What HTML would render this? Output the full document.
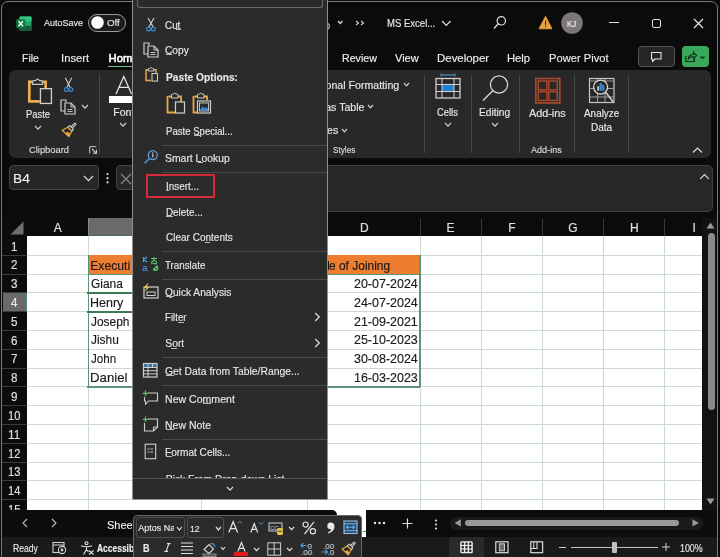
<!DOCTYPE html>
<html><head><meta charset="utf-8"><style>
html,body{margin:0;padding:0;width:720px;height:557px;overflow:hidden;background:#0b0b0b;}
body{position:relative;font-family:"Liberation Sans", sans-serif;}
.t{position:absolute;white-space:nowrap;line-height:1;-webkit-text-stroke:0.15px currentColor;filter:grayscale(1);}
.r{position:absolute;}
.s{position:absolute;overflow:visible;}
</style></head><body>
<div class="r" style="left:0px;top:0px;width:720px;height:557px;background:#0b0b0b;"></div>
<svg class="s" style="left:15px;top:14.8px;" width="17" height="17" viewBox="0 0 17 17">
<rect x="4.5" y="1.5" width="12" height="14.5" rx="1.2" fill="#21a366"/>
<rect x="4.5" y="1.5" width="12" height="5" rx="1" fill="#33c481"/>
<rect x="4.5" y="11" width="12" height="5" rx="1" fill="#185c37"/>
<rect x="1.3" y="4.2" width="9" height="9" rx="1" fill="#107c41"/>
<path d="M3.5 6.2 L8 11.2 M8 6.2 L3.5 11.2" stroke="#fff" stroke-width="1.3"/>
</svg>
<div class="t" style="left:44.00px;top:19.13px;font-size:9px;color:#e8e8e8;font-weight:normal;">AutoSave</div>
<div class="r" style="left:87.5px;top:14px;width:38.5px;height:18px;background:#1c1c1c;border:1.5px solid #9a9a9a;border-radius:9px;box-sizing:border-box;"></div>
<svg class="s" style="left:90.5px;top:16.3px;" width="13" height="13" viewBox="0 0 13 13"><circle cx="6.5" cy="6.5" r="6.3" fill="#fff"/></svg>
<div class="t" style="left:106.60px;top:18.68px;font-size:9.3px;color:#e8e8e8;font-weight:normal;transform:scaleX(1.0438);transform-origin:0 0;">Off</div>
<svg class="s" style="left:326px;top:20px;" width="6" height="12" viewBox="0 0 6 12"><path d="M0 3.2 Q3.3 3.2 3.3 6.2 Q3.3 9.3 0 9.3" fill="none" stroke="#bdbdbd" stroke-width="1.1"/><circle cx="1" cy="1.5" r="0.8" fill="#9a9a9a"/></svg>
<svg class="s" style="left:337.45px;top:19.95px;" width="6.5" height="4.5" viewBox="0 0 6.5 4.5"><polyline points="1,1 3.25,3.5 5.5,1" fill="none" stroke="#d8d8d8" stroke-width="1.2"/></svg>
<svg class="s" style="left:355px;top:20px;" width="11" height="6" viewBox="0 0 11 6"><polyline points="1,1 3.5,3 1,5" fill="none" stroke="#d8d8d8" stroke-width="1.1"/><polyline points="6,1 8.5,3 6,5" fill="none" stroke="#d8d8d8" stroke-width="1.1"/></svg>
<div class="t" style="left:386.50px;top:19.29px;font-size:10px;color:#e6e6e6;font-weight:normal;transform:scaleX(0.9540);transform-origin:0 0;">MS Excel...</div>
<svg class="s" style="left:440.75px;top:20.05px;" width="10.5" height="6.5" viewBox="0 0 10.5 6.5"><polyline points="1,1 5.25,5.5 9.5,1" fill="none" stroke="#e0e0e0" stroke-width="1.2"/></svg>
<svg class="s" style="left:492px;top:15px;" width="14" height="15" viewBox="0 0 14 15"><circle cx="9.3" cy="5.8" r="4.2" fill="none" stroke="#e0e0e0" stroke-width="1.2"/><line x1="6.3" y1="8.8" x2="2" y2="13.5" stroke="#e0e0e0" stroke-width="1.3"/></svg>
<svg class="s" style="left:538px;top:15px;" width="15" height="15" viewBox="0 0 15 15"><path d="M7.5 1.3 L14 13.8 L1 13.8 Z" fill="#e8a33d" stroke="#e8a33d" stroke-width="0.8" stroke-linejoin="round"/><rect x="7" y="5.5" width="1.1" height="4.6" fill="#3a2a10"/><rect x="7" y="11" width="1.1" height="1.2" fill="#3a2a10"/></svg>
<svg class="s" style="left:560.5px;top:11.5px;" width="22" height="22" viewBox="0 0 22 22"><circle cx="11" cy="11" r="10.8" fill="#7b7777"/></svg>
<div class="t" style="left:567.20px;top:19.55px;font-size:8.5px;color:#f0f0f0;font-weight:normal;transform:scaleX(0.9308);transform-origin:0 0;">KJ</div>
<div class="r" style="left:609px;top:21.7px;width:9.5px;height:1.2px;background:#e0e0e0;"></div>
<div class="r" style="left:651.5px;top:18.8px;width:9.5px;height:9px;background:transparent;border:1.3px solid #e0e0e0;border-radius:2px;box-sizing:border-box;"></div>
<svg class="s" style="left:693px;top:17.5px;" width="11" height="11" viewBox="0 0 11 11"><path d="M1 1 L10 10 M10 1 L1 10" stroke="#e8e8e8" stroke-width="1.2"/></svg>
<div class="t" style="left:21.70px;top:53.24px;font-size:11px;color:#ececec;font-weight:normal;transform:scaleX(0.9542);transform-origin:0 0;">File</div>
<div class="t" style="left:61.28px;top:53.24px;font-size:11px;color:#ececec;font-weight:normal;transform:scaleX(1.0244);transform-origin:0 0;">Insert</div>
<div class="t" style="left:108.60px;top:53.07px;font-size:11.2px;color:#ffffff;font-weight:normal;-webkit-text-stroke:0.55px #fff;">Home</div>
<div class="r" style="left:108px;top:65.6px;width:28px;height:1.7px;background:#74c08c;"></div>
<div class="t" style="left:342.30px;top:53.24px;font-size:11px;color:#ececec;font-weight:normal;transform:scaleX(0.9689);transform-origin:0 0;">Review</div>
<div class="t" style="left:395.00px;top:53.24px;font-size:11px;color:#ececec;font-weight:normal;transform:scaleX(1.0042);transform-origin:0 0;">View</div>
<div class="t" style="left:436.50px;top:53.24px;font-size:11px;color:#ececec;font-weight:normal;transform:scaleX(1.0401);transform-origin:0 0;">Developer</div>
<div class="t" style="left:507.00px;top:53.24px;font-size:11px;color:#ececec;font-weight:normal;transform:scaleX(1.0220);transform-origin:0 0;">Help</div>
<div class="t" style="left:549.00px;top:53.24px;font-size:11px;color:#ececec;font-weight:normal;transform:scaleX(1.0148);transform-origin:0 0;">Power Pivot</div>
<div class="r" style="left:638px;top:46.3px;width:36.5px;height:21.2px;background:#262626;border:1.3px solid #555;border-radius:4px;box-sizing:border-box;"></div>
<svg class="s" style="left:650px;top:51px;" width="13" height="12" viewBox="0 0 13 12"><path d="M1.5 1.5 H11 V8 H5 L2.5 10.5 V8 H1.5 Z" fill="none" stroke="#e6e6e6" stroke-width="1.1" stroke-linejoin="round"/></svg>
<div class="r" style="left:681.5px;top:46px;width:27.3px;height:21.3px;background:#3aa85a;border-radius:4px;"></div>
<svg class="s" style="left:684px;top:50px;" width="22" height="14" viewBox="0 0 22 14"><path d="M1.8 6 V11.5 H10.5 V9" fill="none" stroke="#0f2e18" stroke-width="1.2"/><path d="M4 9.5 Q4.5 4.5 9.5 4.5 V2.2 L12.5 5.5 L9.5 8.8 V6.5 Q6 6.5 4 9.5Z" fill="none" stroke="#0f2e18" stroke-width="1.1"/><polyline points="16.5,6.5 18.5,8.3 20.5,6.5" fill="none" stroke="#0f2e18" stroke-width="1.2"/></svg>
<div class="r" style="left:9px;top:70px;width:702px;height:87.5px;background:#282828;border-radius:7px;"></div>
<svg class="s" style="left:26px;top:76px;" width="28" height="30" viewBox="0 0 28 30">
<path d="M3.3 5.9 H6.8 M16.2 5.9 H19.6 V12.3" fill="none" stroke="#eeae4e" stroke-width="2.7"/>
<path d="M3.3 4.6 V25.3 H13.8" fill="none" stroke="#eeae4e" stroke-width="2.7"/>
<path d="M6.6 8.4 V5.6 Q6.6 4.6 8 4.6 H9.6 Q11.5 1.6 13.5 4.6 H15 Q16.4 4.6 16.4 5.6 V8.4 Z" fill="#282828" stroke="#c8c8c8" stroke-width="1.15"/>
<rect x="14.45" y="12.65" width="11" height="14.8" fill="none" stroke="#cfcfcf" stroke-width="1.3"/>
</svg>
<div class="t" style="left:25.80px;top:110.32px;font-size:10.2px;color:#e8e8e8;font-weight:normal;transform:scaleX(0.9210);transform-origin:0 0;">Paste</div>
<svg class="s" style="left:33.5px;top:125.4px;" width="8" height="5.2" viewBox="0 0 8 5.2"><polyline points="1,1 4.0,4.2 7,1" fill="none" stroke="#d0d0d0" stroke-width="1.2"/></svg>
<svg class="s" style="left:62px;top:77px;" width="13" height="16" viewBox="0 0 13 16">
<path d="M3.3 0.8 L8.2 10.5 M9.7 0.8 L4.8 10.5" stroke="#d4d4d4" stroke-width="1.05"/>
<circle cx="4.2" cy="12.5" r="1.9" fill="none" stroke="#3d8bd0" stroke-width="1.2"/>
<circle cx="8.8" cy="12.5" r="1.9" fill="none" stroke="#3d8bd0" stroke-width="1.2"/>
</svg>
<svg class="s" style="left:60px;top:99px;" width="17" height="16" viewBox="0 0 17 16">
<path d="M6 3 V1 H1 V12 H5" fill="none" stroke="#cfcfcf" stroke-width="1.2"/>
<path d="M5 4 H11 L15 8 V15 H5 Z" fill="none" stroke="#cfcfcf" stroke-width="1.2"/>
<path d="M11 4 V8 H15" fill="none" stroke="#cfcfcf" stroke-width="1"/>
<line x1="7.5" y1="10.5" x2="12.5" y2="10.5" stroke="#cfcfcf" stroke-width="0.9"/>
<line x1="7.5" y1="12.5" x2="12.5" y2="12.5" stroke="#cfcfcf" stroke-width="0.9"/>
</svg>
<svg class="s" style="left:81.3px;top:104.2px;" width="8" height="5.2" viewBox="0 0 8 5.2"><polyline points="1,1 4.0,4.2 7,1" fill="none" stroke="#d0d0d0" stroke-width="1.2"/></svg>
<svg class="s" style="left:61px;top:122px;" width="16" height="16" viewBox="0 0 16 16">
<path d="M1.2 8.3 L7.8 14.6 L10.8 9.3 L6.7 5.3 Z" fill="none" stroke="#e8a845" stroke-width="1.2" stroke-linejoin="round"/>
<path d="M4.5 11.5 L7.8 14.6 L9.3 12 L6.5 9.5 Z" fill="#e8a845"/>
<path d="M6.7 5.3 L8.7 3.5 L12.4 7.2 L10.8 9.3" fill="none" stroke="#d0d0d0" stroke-width="1.1"/>
<path d="M10 4.8 L13.6 1.3 Q15 1 14.8 2.6 L11.3 6.2" fill="none" stroke="#d0d0d0" stroke-width="1.1"/>
</svg>
<div class="t" style="left:29.40px;top:145.12px;font-size:9.6px;color:#dcdcdc;font-weight:normal;transform:scaleX(0.9723);transform-origin:0 0;">Clipboard</div>
<svg class="s" style="left:88.5px;top:145.5px;" width="9" height="8" viewBox="0 0 9 8"><path d="M0.7 7.3 V0.7 H7.3" fill="none" stroke="#cfcfcf" stroke-width="1"/><path d="M3 3 L7.5 7.3 M4 7.3 H7.5 V3.8" fill="none" stroke="#cfcfcf" stroke-width="1.1"/></svg>
<div class="r" style="left:99px;top:74px;width:1px;height:79px;background:#474747;"></div>
<svg class="s" style="left:112px;top:74px;" width="22" height="22" viewBox="0 0 22 22"><path d="M4 20 L11.8 2.6 L19.6 20 M7.4 13.3 H16.2" fill="none" stroke="#e6e6e6" stroke-width="1.25"/></svg>
<div class="r" style="left:109px;top:96px;width:23px;height:6.5px;background:#ffffff;"></div>
<div class="t" style="left:113.30px;top:107.16px;font-size:10.5px;color:#e8e8e8;font-weight:normal;">Font</div>
<svg class="s" style="left:119.3px;top:121.9px;" width="8" height="5.2" viewBox="0 0 8 5.2"><polyline points="1,1 4.0,4.2 7,1" fill="none" stroke="#d0d0d0" stroke-width="1.2"/></svg>
<div class="t" style="left:325.59px;top:80.08px;font-size:10.6px;color:#e8e8e8;font-weight:normal;">onal Formatting</div>
<svg class="s" style="left:402.9px;top:81.6px;" width="7" height="4.8" viewBox="0 0 7 4.8"><polyline points="1,1 3.5,3.8 6,1" fill="none" stroke="#d0d0d0" stroke-width="1.2"/></svg>
<div class="t" style="left:325.23px;top:102.18px;font-size:10.6px;color:#e8e8e8;font-weight:normal;">as Table</div>
<svg class="s" style="left:367.1px;top:104.39999999999999px;" width="7" height="4.8" viewBox="0 0 7 4.8"><polyline points="1,1 3.5,3.8 6,1" fill="none" stroke="#d0d0d0" stroke-width="1.2"/></svg>
<div class="t" style="left:327.11px;top:125.48px;font-size:10.6px;color:#e8e8e8;font-weight:normal;">es</div>
<svg class="s" style="left:340.5px;top:127.6px;" width="7" height="4.8" viewBox="0 0 7 4.8"><polyline points="1,1 3.5,3.8 6,1" fill="none" stroke="#d0d0d0" stroke-width="1.2"/></svg>
<div class="t" style="left:332.50px;top:145.02px;font-size:9.6px;color:#dcdcdc;font-weight:normal;transform:scaleX(0.8546);transform-origin:0 0;">Styles</div>
<div class="r" style="left:424px;top:74.5px;width:1px;height:78px;background:#474747;"></div>
<svg class="s" style="left:434px;top:73px;" width="28" height="27" viewBox="0 0 28 27">
<line x1="7" y1="2" x2="21" y2="2" stroke="#4a9fe0" stroke-width="1"/>
<line x1="7" y1="0.5" x2="7" y2="3.5" stroke="#4a9fe0" stroke-width="1"/>
<line x1="21" y1="0.5" x2="21" y2="3.5" stroke="#4a9fe0" stroke-width="1"/>
<rect x="2" y="5.5" width="24" height="19.5" fill="none" stroke="#cfcfcf" stroke-width="1.3"/>
<rect x="8" y="11.5" width="12" height="7" fill="#1f7fd6"/>
<line x1="2" y1="11.5" x2="26" y2="11.5" stroke="#cfcfcf" stroke-width="1"/>
<line x1="2" y1="18.5" x2="26" y2="18.5" stroke="#cfcfcf" stroke-width="1"/>
<line x1="8" y1="5.5" x2="8" y2="25" stroke="#cfcfcf" stroke-width="1"/>
<line x1="20" y1="5.5" x2="20" y2="25" stroke="#cfcfcf" stroke-width="1"/>
</svg>
<div class="t" style="left:437.40px;top:106.88px;font-size:10.6px;color:#e8e8e8;font-weight:normal;transform:scaleX(0.8860);transform-origin:0 0;">Cells</div>
<svg class="s" style="left:443.7px;top:122.4px;" width="8" height="5.2" viewBox="0 0 8 5.2"><polyline points="1,1 4.0,4.2 7,1" fill="none" stroke="#d0d0d0" stroke-width="1.2"/></svg>
<div class="r" style="left:471px;top:74.5px;width:1px;height:78px;background:#474747;"></div>
<svg class="s" style="left:481px;top:73px;" width="28" height="30" viewBox="0 0 28 30"><circle cx="18" cy="11.5" r="8.6" fill="none" stroke="#d8d8d8" stroke-width="1.3"/><line x1="11.8" y1="17.7" x2="2" y2="27.5" stroke="#d8d8d8" stroke-width="1.4"/></svg>
<div class="t" style="left:479.40px;top:106.98px;font-size:10.6px;color:#e8e8e8;font-weight:normal;transform:scaleX(0.9600);transform-origin:0 0;">Editing</div>
<svg class="s" style="left:490.8px;top:122.10000000000001px;" width="8" height="5.2" viewBox="0 0 8 5.2"><polyline points="1,1 4.0,4.2 7,1" fill="none" stroke="#d0d0d0" stroke-width="1.2"/></svg>
<div class="r" style="left:519px;top:74.5px;width:1px;height:78px;background:#474747;"></div>
<svg class="s" style="left:533px;top:76px;" width="28" height="29" viewBox="0 0 28 29">
<rect x="2.8" y="2.5" width="24" height="24.5" fill="none" stroke="#a8472c" stroke-width="1.7"/>
<rect x="5.3" y="5" width="8.6" height="8.8" fill="none" stroke="#a8472c" stroke-width="1.5"/>
<rect x="15.7" y="5" width="8.6" height="8.8" fill="none" stroke="#a8472c" stroke-width="1.5"/>
<rect x="5.3" y="15.7" width="8.6" height="8.8" fill="none" stroke="#a8472c" stroke-width="1.5"/>
<rect x="15.7" y="15.7" width="8.6" height="8.8" fill="none" stroke="#a8472c" stroke-width="1.5"/>
</svg>
<div class="t" style="left:528.60px;top:107.88px;font-size:10.6px;color:#e8e8e8;font-weight:normal;transform:scaleX(1.0218);transform-origin:0 0;">Add-ins</div>
<div class="t" style="left:531.00px;top:144.92px;font-size:9.6px;color:#dcdcdc;font-weight:normal;transform:scaleX(0.9471);transform-origin:0 0;">Add-ins</div>
<div class="r" style="left:574px;top:74.5px;width:1px;height:78px;background:#474747;"></div>
<svg class="s" style="left:588px;top:77px;" width="28" height="27" viewBox="0 0 28 27">
<rect x="1.5" y="1.5" width="24.5" height="24" fill="none" stroke="#c8c8c8" stroke-width="1.2"/>
<line x1="1.5" y1="4" x2="26" y2="4" stroke="#a0a0a0" stroke-width="0.9"/>
<line x1="1.5" y1="11.5" x2="26" y2="11.5" stroke="#a0a0a0" stroke-width="1"/>
<line x1="1.5" y1="20" x2="26" y2="20" stroke="#a0a0a0" stroke-width="1"/>
<line x1="9.5" y1="1.5" x2="9.5" y2="25.5" stroke="#a0a0a0" stroke-width="1"/>
<line x1="17" y1="1.5" x2="17" y2="25.5" stroke="#a0a0a0" stroke-width="1"/>
<circle cx="12.6" cy="10.1" r="7" fill="#282828" stroke="#d8d8d8" stroke-width="1.3"/>
<rect x="9.2" y="9.2" width="2" height="4.5" fill="#bdbdbd"/>
<rect x="11.6" y="6.2" width="2.2" height="7.5" fill="#3b8fd9"/>
<rect x="14.2" y="7.8" width="2" height="5.9" fill="#3b8fd9"/>
<line x1="17.6" y1="15.1" x2="25" y2="24.8" stroke="#d8d8d8" stroke-width="1.5"/>
</svg>
<div class="t" style="left:583.80px;top:107.88px;font-size:10.6px;color:#e8e8e8;font-weight:normal;transform:scaleX(0.9366);transform-origin:0 0;">Analyze</div>
<div class="t" style="left:590.90px;top:122.28px;font-size:10.6px;color:#e8e8e8;font-weight:normal;transform:scaleX(0.9428);transform-origin:0 0;">Data</div>
<div class="r" style="left:628px;top:74.5px;width:1px;height:78px;background:#474747;"></div>
<svg class="s" style="left:692px;top:146px;" width="12" height="8" viewBox="0 0 12 8"><polyline points="1,6.5 5.5,2 10,6.5" fill="none" stroke="#d8d8d8" stroke-width="1.2"/></svg>
<div class="r" style="left:9px;top:165px;width:89.5px;height:25.3px;background:#262626;border:1px solid #444;border-radius:4px;box-sizing:border-box;"></div>
<div class="t" style="left:12.98px;top:172.42px;font-size:13.5px;color:#f2f2f2;font-weight:normal;transform:scaleX(1.0185);transform-origin:0 0;">B4</div>
<svg class="s" style="left:83.4px;top:175.2px;" width="11" height="6.6" viewBox="0 0 11 6.6"><polyline points="1,1 5.5,5.6 10,1" fill="none" stroke="#e0e0e0" stroke-width="1.2"/></svg>
<svg class="s" style="left:104.5px;top:172px;" width="5" height="13" viewBox="0 0 5 13"><circle cx="2.5" cy="2" r="1.1" fill="#e0e0e0"/><circle cx="2.5" cy="6.2" r="1.1" fill="#e0e0e0"/><circle cx="2.5" cy="10.4" r="1.1" fill="#e0e0e0"/></svg>
<div class="r" style="left:116px;top:165px;width:40px;height:25.3px;background:#262626;border:1px solid #444;border-radius:4px;box-sizing:border-box;"></div>
<svg class="s" style="left:120px;top:173px;" width="12" height="12" viewBox="0 0 12 12"><path d="M1 1 L11 11 M11 1 L1 11" stroke="#8a8a8a" stroke-width="1.1"/></svg>
<div class="r" style="left:200px;top:165px;width:512.5px;height:46.7px;background:#282828;border:1px solid #404040;border-radius:5px;box-sizing:border-box;"></div>
<svg class="s" style="left:698.5px;top:172.5px;" width="11" height="7" viewBox="0 0 11 7"><polyline points="1.2,5.8 5.5,1.5 9.8,5.8" fill="none" stroke="#e0e0e0" stroke-width="1.2"/></svg>
<div class="r" style="left:2px;top:218px;width:700px;height:18px;background:#0c0c0c;"></div>
<div class="r" style="left:27px;top:236px;width:675px;height:274px;background:#ffffff;"></div>
<div class="r" style="left:2px;top:236px;width:25.3px;height:274px;background:#0c0c0c;"></div>
<div class="r" style="left:27px;top:254.74px;width:675px;height:1px;background:#cbdad3;"></div>
<div class="r" style="left:2px;top:254.74px;width:25.3px;height:1px;background:#3a3a3a;"></div>
<div class="r" style="left:27px;top:273.55px;width:675px;height:1px;background:#cbdad3;"></div>
<div class="r" style="left:2px;top:273.55px;width:25.3px;height:1px;background:#3a3a3a;"></div>
<div class="r" style="left:27px;top:292.36px;width:675px;height:1px;background:#cbdad3;"></div>
<div class="r" style="left:2px;top:292.36px;width:25.3px;height:1px;background:#3a3a3a;"></div>
<div class="r" style="left:27px;top:311.17px;width:675px;height:1px;background:#cbdad3;"></div>
<div class="r" style="left:2px;top:311.17px;width:25.3px;height:1px;background:#3a3a3a;"></div>
<div class="r" style="left:27px;top:329.98px;width:675px;height:1px;background:#cbdad3;"></div>
<div class="r" style="left:2px;top:329.98px;width:25.3px;height:1px;background:#3a3a3a;"></div>
<div class="r" style="left:27px;top:348.79px;width:675px;height:1px;background:#cbdad3;"></div>
<div class="r" style="left:2px;top:348.79px;width:25.3px;height:1px;background:#3a3a3a;"></div>
<div class="r" style="left:27px;top:367.6px;width:675px;height:1px;background:#cbdad3;"></div>
<div class="r" style="left:2px;top:367.6px;width:25.3px;height:1px;background:#3a3a3a;"></div>
<div class="r" style="left:27px;top:386.41px;width:675px;height:1px;background:#cbdad3;"></div>
<div class="r" style="left:2px;top:386.41px;width:25.3px;height:1px;background:#3a3a3a;"></div>
<div class="r" style="left:27px;top:405.22px;width:675px;height:1px;background:#cbdad3;"></div>
<div class="r" style="left:2px;top:405.22px;width:25.3px;height:1px;background:#3a3a3a;"></div>
<div class="r" style="left:27px;top:424.03px;width:675px;height:1px;background:#cbdad3;"></div>
<div class="r" style="left:2px;top:424.03px;width:25.3px;height:1px;background:#3a3a3a;"></div>
<div class="r" style="left:27px;top:442.84px;width:675px;height:1px;background:#cbdad3;"></div>
<div class="r" style="left:2px;top:442.84px;width:25.3px;height:1px;background:#3a3a3a;"></div>
<div class="r" style="left:27px;top:461.65px;width:675px;height:1px;background:#cbdad3;"></div>
<div class="r" style="left:2px;top:461.65px;width:25.3px;height:1px;background:#3a3a3a;"></div>
<div class="r" style="left:27px;top:480.46px;width:675px;height:1px;background:#cbdad3;"></div>
<div class="r" style="left:2px;top:480.46px;width:25.3px;height:1px;background:#3a3a3a;"></div>
<div class="r" style="left:27px;top:499.27px;width:675px;height:1px;background:#cbdad3;"></div>
<div class="r" style="left:2px;top:499.27px;width:25.3px;height:1px;background:#3a3a3a;"></div>
<div class="r" style="left:87.5px;top:236px;width:1px;height:274px;background:#cbdad3;"></div>
<div class="r" style="left:201.2px;top:236px;width:1px;height:274px;background:#cbdad3;"></div>
<div class="r" style="left:306.7px;top:236px;width:1px;height:274px;background:#cbdad3;"></div>
<div class="r" style="left:419.5px;top:236px;width:1px;height:274px;background:#cbdad3;"></div>
<div class="r" style="left:480.5px;top:236px;width:1px;height:274px;background:#cbdad3;"></div>
<div class="r" style="left:541.5px;top:236px;width:1px;height:274px;background:#cbdad3;"></div>
<div class="r" style="left:603.0px;top:236px;width:1px;height:274px;background:#cbdad3;"></div>
<div class="r" style="left:664.0px;top:236px;width:1px;height:274px;background:#cbdad3;"></div>
<div class="r" style="left:306.7px;top:219px;width:1px;height:17px;background:#3a3a3a;"></div>
<div class="r" style="left:419.5px;top:219px;width:1px;height:17px;background:#3a3a3a;"></div>
<div class="r" style="left:480.5px;top:219px;width:1px;height:17px;background:#3a3a3a;"></div>
<div class="r" style="left:541.5px;top:219px;width:1px;height:17px;background:#3a3a3a;"></div>
<div class="r" style="left:603.0px;top:219px;width:1px;height:17px;background:#3a3a3a;"></div>
<div class="r" style="left:664.0px;top:219px;width:1px;height:17px;background:#3a3a3a;"></div>
<div class="r" style="left:2.5px;top:292.86px;width:24.8px;height:18.4px;background:#6a6a6a;"></div>
<div class="t" style="left:11.25px;top:240.60px;font-size:12.5px;color:#e0e0e0;font-weight:normal;transform:scaleX(0.9286);transform-origin:0 0;">1</div>
<div class="t" style="left:11.25px;top:259.41px;font-size:12.5px;color:#e0e0e0;font-weight:normal;transform:scaleX(0.9286);transform-origin:0 0;">2</div>
<div class="t" style="left:11.25px;top:278.22px;font-size:12.5px;color:#e0e0e0;font-weight:normal;transform:scaleX(0.9286);transform-origin:0 0;">3</div>
<div class="t" style="left:11.25px;top:297.03px;font-size:12.5px;color:#f0f0f0;font-weight:normal;transform:scaleX(0.9286);transform-origin:0 0;">4</div>
<div class="t" style="left:11.25px;top:315.84px;font-size:12.5px;color:#e0e0e0;font-weight:normal;transform:scaleX(0.9286);transform-origin:0 0;">5</div>
<div class="t" style="left:11.25px;top:334.65px;font-size:12.5px;color:#e0e0e0;font-weight:normal;transform:scaleX(0.9286);transform-origin:0 0;">6</div>
<div class="t" style="left:11.25px;top:353.46px;font-size:12.5px;color:#e0e0e0;font-weight:normal;transform:scaleX(0.9286);transform-origin:0 0;">7</div>
<div class="t" style="left:11.25px;top:372.27px;font-size:12.5px;color:#e0e0e0;font-weight:normal;transform:scaleX(0.9286);transform-origin:0 0;">8</div>
<div class="t" style="left:11.25px;top:391.08px;font-size:12.5px;color:#e0e0e0;font-weight:normal;transform:scaleX(0.9286);transform-origin:0 0;">9</div>
<div class="t" style="left:8.30px;top:409.89px;font-size:12.5px;color:#e0e0e0;font-weight:normal;transform:scaleX(0.8888);transform-origin:0 0;">10</div>
<div class="t" style="left:8.30px;top:428.70px;font-size:12.5px;color:#e0e0e0;font-weight:normal;transform:scaleX(0.9521);transform-origin:0 0;">11</div>
<div class="t" style="left:8.30px;top:447.51px;font-size:12.5px;color:#e0e0e0;font-weight:normal;transform:scaleX(0.8888);transform-origin:0 0;">12</div>
<div class="t" style="left:8.30px;top:466.32px;font-size:12.5px;color:#e0e0e0;font-weight:normal;transform:scaleX(0.8888);transform-origin:0 0;">13</div>
<div class="t" style="left:8.30px;top:485.13px;font-size:12.5px;color:#e0e0e0;font-weight:normal;transform:scaleX(0.8888);transform-origin:0 0;">14</div>
<div class="t" style="left:8.30px;top:503.94px;font-size:12.5px;color:#e0e0e0;font-weight:normal;transform:scaleX(0.8888);transform-origin:0 0;">15</div>
<div class="r" style="left:88px;top:218px;width:114px;height:17.6px;background:#6a6a6a;"></div>
<div class="r" style="left:88px;top:234.6px;width:114px;height:1.2px;background:#466f5a;"></div>
<div class="r" style="left:88px;top:218px;width:1px;height:17px;background:#8a8a8a;"></div>
<div class="r" style="left:25.8px;top:292.86px;width:1.5px;height:18.9px;background:#4e8a68;"></div>
<svg class="s" style="left:10px;top:221px;" width="14" height="14" viewBox="0 0 14 14"><path d="M13.5 0.5 V13.5 H0.5 Z" fill="#6e6e6e"/></svg>
<div class="t" style="left:53.80px;top:222.39px;font-size:12px;color:#e0e0e0;font-weight:normal;">A</div>
<div class="t" style="left:359.90px;top:222.39px;font-size:12px;color:#e0e0e0;font-weight:normal;">D</div>
<div class="t" style="left:446.60px;top:222.39px;font-size:12px;color:#e0e0e0;font-weight:normal;">E</div>
<div class="t" style="left:508.20px;top:222.39px;font-size:12px;color:#e0e0e0;font-weight:normal;">F</div>
<div class="t" style="left:568.30px;top:222.39px;font-size:12px;color:#e0e0e0;font-weight:normal;">G</div>
<div class="t" style="left:630.00px;top:222.39px;font-size:12px;color:#e0e0e0;font-weight:normal;">H</div>
<div class="t" style="left:692.60px;top:222.39px;font-size:12px;color:#e0e0e0;font-weight:normal;">I</div>
<div class="r" style="left:88px;top:255.24px;width:332px;height:18.9px;background:#ed7d31;"></div>
<div class="t" style="left:90.20px;top:260.42px;font-size:12.2px;color:#2e1406;font-weight:normal;">Executi</div>
<div class="t" style="left:329.40px;top:260.42px;font-size:12.2px;color:#2e1406;font-weight:normal;transform:scaleX(0.9812);transform-origin:0 0;">e of Joining</div>
<div class="r" style="left:327px;top:261px;width:1.5px;height:9px;background:#2e1406;"></div>
<div class="t" style="left:91.00px;top:277.98px;font-size:12.2px;color:#1a1a1a;font-weight:normal;transform:scaleX(0.9773);transform-origin:0 0;">Giana</div>
<div class="t" style="left:353.70px;top:277.98px;font-size:12.2px;color:#1a1a1a;font-weight:normal;transform:scaleX(1.0230);transform-origin:0 0;">20-07-2024</div>
<div class="t" style="left:89.98px;top:296.79px;font-size:12.2px;color:#1a1a1a;font-weight:normal;transform:scaleX(1.0242);transform-origin:0 0;">Henry</div>
<div class="t" style="left:353.70px;top:296.79px;font-size:12.2px;color:#1a1a1a;font-weight:normal;transform:scaleX(1.0230);transform-origin:0 0;">24-07-2024</div>
<div class="t" style="left:91.00px;top:315.60px;font-size:12.2px;color:#1a1a1a;font-weight:normal;transform:scaleX(0.9787);transform-origin:0 0;">Joseph</div>
<div class="t" style="left:353.70px;top:315.60px;font-size:12.2px;color:#1a1a1a;font-weight:normal;transform:scaleX(1.0230);transform-origin:0 0;">21-09-2021</div>
<div class="t" style="left:91.00px;top:334.41px;font-size:12.2px;color:#1a1a1a;font-weight:normal;transform:scaleX(0.9757);transform-origin:0 0;">Jishu</div>
<div class="t" style="left:353.70px;top:334.41px;font-size:12.2px;color:#1a1a1a;font-weight:normal;transform:scaleX(1.0230);transform-origin:0 0;">25-10-2023</div>
<div class="t" style="left:91.00px;top:353.22px;font-size:12.2px;color:#1a1a1a;font-weight:normal;transform:scaleX(0.9513);transform-origin:0 0;">John</div>
<div class="t" style="left:353.70px;top:353.22px;font-size:12.2px;color:#1a1a1a;font-weight:normal;transform:scaleX(1.0230);transform-origin:0 0;">30-08-2024</div>
<div class="t" style="left:89.92px;top:372.03px;font-size:12.2px;color:#1a1a1a;font-weight:normal;transform:scaleX(1.0839);transform-origin:0 0;">Daniel</div>
<div class="t" style="left:353.70px;top:372.03px;font-size:12.2px;color:#1a1a1a;font-weight:normal;transform:scaleX(1.0230);transform-origin:0 0;">16-03-2023</div>
<div class="r" style="left:87.6px;top:255.24px;width:1.2px;height:131.67px;background:#5d9478;"></div>
<div class="r" style="left:419px;top:255.24px;width:1.5px;height:131.67px;background:#5d9478;"></div>
<div class="r" style="left:87px;top:386.11px;width:333px;height:1.5px;background:#5d9478;"></div>
<div class="r" style="left:88px;top:274.05px;width:332px;height:1px;background:#5d9478;"></div>
<div class="r" style="left:87px;top:292.36px;width:60px;height:2px;background:#3f7a57;"></div>
<div class="r" style="left:87px;top:310.67px;width:60px;height:2px;background:#3f7a57;"></div>
<div class="r" style="left:702px;top:218px;width:15px;height:292px;background:#121212;"></div>
<svg class="s" style="left:706px;top:221.5px;" width="9" height="7" viewBox="0 0 9 7"><path d="M4.5 0.5 L8.5 6.5 H0.5 Z" fill="#9a9a9a"/></svg>
<div class="r" style="left:707.5px;top:233px;width:7px;height:177px;background:#8a8a8a;border-radius:3.5px;"></div>
<svg class="s" style="left:706px;top:498px;" width="9" height="7" viewBox="0 0 9 7"><path d="M4.5 6.5 L8.5 0.5 H0.5 Z" fill="#9a9a9a"/></svg>
<div class="r" style="left:330px;top:510px;width:40px;height:27px;background:#ffffff;"></div>
<div class="r" style="left:2px;top:510px;width:335px;height:27px;background:#0c0c0c;border-top-right-radius:5px;"></div>
<div class="r" style="left:366px;top:510px;width:351px;height:27px;background:#0c0c0c;"></div>
<div class="r" style="left:363px;top:530.5px;width:3px;height:1.5px;background:#3f9a5a;"></div>
<svg class="s" style="left:21px;top:518px;" width="9" height="10" viewBox="0 0 9 10"><polyline points="6,1 2,5 6,9" fill="none" stroke="#bdbdbd" stroke-width="1.1"/></svg>
<svg class="s" style="left:50px;top:518px;" width="9" height="10" viewBox="0 0 9 10"><polyline points="2,1 6,5 2,9" fill="none" stroke="#bdbdbd" stroke-width="1.1"/></svg>
<div class="t" style="left:107.00px;top:520.14px;font-size:11px;color:#ececec;font-weight:normal;">Sheet1</div>
<svg class="s" style="left:373px;top:521px;" width="13" height="4" viewBox="0 0 13 4"><circle cx="2" cy="2" r="1.2" fill="#e8e8e8"/><circle cx="6.5" cy="2" r="1.2" fill="#e8e8e8"/><circle cx="11" cy="2" r="1.2" fill="#e8e8e8"/></svg>
<svg class="s" style="left:402px;top:517.5px;" width="11" height="11" viewBox="0 0 11 11"><path d="M5.5 0.5 V10.5 M0.5 5.5 H10.5" stroke="#e0e0e0" stroke-width="1.2"/></svg>
<svg class="s" style="left:433.5px;top:518.5px;" width="4" height="11" viewBox="0 0 4 11"><circle cx="2" cy="1.5" r="1.1" fill="#e0e0e0"/><circle cx="2" cy="5.5" r="1.1" fill="#e0e0e0"/><circle cx="2" cy="9.5" r="1.1" fill="#e0e0e0"/></svg>
<div class="r" style="left:449.7px;top:516.7px;width:253px;height:13.6px;background:#1a1a1a;border-radius:7px;"></div>
<svg class="s" style="left:453.5px;top:519.3px;" width="8" height="8" viewBox="0 0 8 8"><path d="M6.8 0.3 V7.5 L0.5 3.9 Z" fill="#9a9a9a"/></svg>
<div class="r" style="left:465px;top:519.6px;width:214px;height:6.8px;background:#9a9a9a;border-radius:3.4px;"></div>
<svg class="s" style="left:692px;top:519.3px;" width="8" height="8" viewBox="0 0 8 8"><path d="M0.5 0.3 V7.5 L6.8 3.9 Z" fill="#9a9a9a"/></svg>
<div class="r" style="left:2px;top:537px;width:715px;height:20px;background:#1a1a1a;"></div>
<div class="t" style="left:12.60px;top:543.99px;font-size:10px;color:#e6e6e6;font-weight:normal;transform:scaleX(0.8579);transform-origin:0 0;">Ready</div>
<svg class="s" style="left:52px;top:541px;" width="15" height="14" viewBox="0 0 15 14"><rect x="1" y="1.5" width="11" height="10" fill="none" stroke="#d0d0d0" stroke-width="1.1"/><line x1="1" y1="4" x2="12" y2="4" stroke="#d0d0d0"/><circle cx="10" cy="9" r="3.6" fill="#1a1a1a" stroke="#d0d0d0" stroke-width="1.1"/><circle cx="10" cy="9" r="1.4" fill="#d0d0d0"/></svg>
<svg class="s" style="left:80px;top:540.5px;" width="15" height="14" viewBox="0 0 15 14"><circle cx="6.5" cy="2.3" r="1.5" fill="none" stroke="#e0e0e0" stroke-width="1.1"/><path d="M1 4.8 Q6.5 6.8 12 4.8 M6.5 6.3 V8.5 L3.5 13.5 M6.5 8.5 L8.5 11" fill="none" stroke="#e0e0e0" stroke-width="1.1"/><path d="M9 9.5 L13.5 13.5 M13.5 9.5 L9 13.5" stroke="#e0e0e0" stroke-width="1.1"/></svg>
<div class="t" style="left:96.70px;top:543.99px;font-size:10px;color:#f0f0f0;font-weight:bold;transform:scaleX(0.8444);transform-origin:0 0;">Accessibility</div>
<div class="r" style="left:448.8px;top:537px;width:35px;height:20px;background:#2a2a2a;"></div>
<svg class="s" style="left:459.5px;top:540.8px;" width="13" height="12.5" viewBox="0 0 13 12.5"><rect x="0.2" y="0.2" width="12.6" height="12.1" rx="1.5" fill="#ececec"/><g fill="#262626"><rect x="1.6" y="1.6" width="2.3" height="2.3" rx="0.6"/><rect x="5.35" y="1.6" width="2.3" height="2.3" rx="0.6"/><rect x="9.1" y="1.6" width="2.3" height="2.3" rx="0.6"/><rect x="1.6" y="5.1" width="2.3" height="2.3" rx="0.6"/><rect x="5.35" y="5.1" width="2.3" height="2.3" rx="0.6"/><rect x="9.1" y="5.1" width="2.3" height="2.3" rx="0.6"/><rect x="1.6" y="8.6" width="2.3" height="2.3" rx="0.6"/><rect x="5.35" y="8.6" width="2.3" height="2.3" rx="0.6"/><rect x="9.1" y="8.6" width="2.3" height="2.3" rx="0.6"/></g></svg>
<svg class="s" style="left:494.5px;top:541px;" width="14" height="12.5" viewBox="0 0 14 12.5"><rect x="0.8" y="0.8" width="12.2" height="10.9" fill="none" stroke="#dcdcdc" stroke-width="1.2"/><rect x="4.3" y="2.8" width="5.2" height="7" fill="#6a6a6a" stroke="#dcdcdc" stroke-width="0.9"/></svg>
<svg class="s" style="left:530px;top:541px;" width="13.5" height="12.5" viewBox="0 0 13.5 12.5"><rect x="0.8" y="0.8" width="11.8" height="10.9" fill="none" stroke="#dcdcdc" stroke-width="1.2"/><path d="M7 0.8 V7.5 H0.8" fill="none" stroke="#dcdcdc" stroke-width="1.1"/><line x1="3.8" y1="0.8" x2="3.8" y2="7.5" stroke="#dcdcdc" stroke-width="1"/></svg>
<div class="r" style="left:559px;top:547px;width:6.5px;height:1px;background:#d0d0d0;"></div>
<div class="r" style="left:571px;top:547px;width:86.5px;height:1px;background:#bdbdbd;"></div>
<div class="r" style="left:612px;top:542px;width:4.6px;height:10.7px;background:#bdbdbd;border-radius:1px;"></div>
<svg class="s" style="left:662px;top:543px;" width="8" height="8" viewBox="0 0 8 8"><path d="M4 0 V8 M0 4 H8" stroke="#d0d0d0" stroke-width="1"/></svg>
<div class="t" style="left:680.20px;top:543.99px;font-size:10px;color:#e6e6e6;font-weight:normal;transform:scaleX(0.8877);transform-origin:0 0;">100%</div>
<div class="r" style="left:1px;top:1px;width:717px;height:600px;background:transparent;border:1.4px solid #7a7a7a;border-radius:7px;box-sizing:border-box;"></div>
<div class="r" style="left:132px;top:-5px;width:196px;height:504.5px;background:#2b2b2b;border:1.3px solid #8e8e8e;border-top:none;border-radius:0 0 2px 2px;box-sizing:border-box;"></div>
<div class="r" style="left:136.5px;top:-5px;width:186.5px;height:12.5px;background:#2b2b2b;border:1px solid #6a6a6a;border-top:none;border-radius:0 0 3px 3px;box-sizing:border-box;"></div>
<div class="t" style="left:165.30px;top:20.53px;font-size:10.3px;color:#e6e6e6;font-weight:normal;transform:scaleX(0.9590);transform-origin:0 0;">Cut</div>
<div class="r" style="left:176px;top:28.8px;width:4.5px;height:0.9px;background:#bdbdbd;"></div>
<div class="t" style="left:165.30px;top:46.03px;font-size:10.3px;color:#e6e6e6;font-weight:normal;transform:scaleX(0.9884);transform-origin:0 0;">Copy</div>
<div class="r" style="left:165.5px;top:54.3px;width:6px;height:0.9px;background:#bdbdbd;"></div>
<div class="t" style="left:166.00px;top:72.83px;font-size:10.3px;color:#e6e6e6;font-weight:bold;transform:scaleX(0.9912);transform-origin:0 0;">Paste Options:</div>
<div class="t" style="left:166.00px;top:126.73px;font-size:10.3px;color:#e6e6e6;font-weight:normal;transform:scaleX(0.9309);transform-origin:0 0;">Paste Special...</div>
<div class="r" style="left:193.5px;top:135.0px;width:6px;height:0.9px;background:#bdbdbd;"></div>
<div class="r" style="left:161.5px;top:144.5px;width:165px;height:1px;background:#4a4a4a;"></div>
<div class="t" style="left:165.30px;top:154.03px;font-size:10.3px;color:#e6e6e6;font-weight:normal;transform:scaleX(1.0097);transform-origin:0 0;">Smart Lookup</div>
<div class="r" style="left:197.5px;top:162.3px;width:5.5px;height:0.9px;background:#bdbdbd;"></div>
<div class="r" style="left:161.5px;top:171.5px;width:165px;height:1px;background:#4a4a4a;"></div>
<div class="t" style="left:165.60px;top:181.93px;font-size:10.3px;color:#e6e6e6;font-weight:normal;transform:scaleX(0.9619);transform-origin:0 0;">Insert...</div>
<div class="r" style="left:165.5px;top:190.20000000000002px;width:3px;height:0.9px;background:#bdbdbd;"></div>
<div class="t" style="left:165.60px;top:208.03px;font-size:10.3px;color:#e6e6e6;font-weight:normal;transform:scaleX(0.9550);transform-origin:0 0;">Delete...</div>
<div class="r" style="left:165.5px;top:216.3px;width:7px;height:0.9px;background:#bdbdbd;"></div>
<div class="t" style="left:165.60px;top:233.33px;font-size:10.3px;color:#e6e6e6;font-weight:normal;transform:scaleX(0.9718);transform-origin:0 0;">Clear Contents</div>
<div class="r" style="left:204.7px;top:241.60000000000002px;width:5px;height:0.9px;background:#bdbdbd;"></div>
<div class="r" style="left:161.5px;top:250.5px;width:165px;height:1px;background:#4a4a4a;"></div>
<div class="t" style="left:165.30px;top:260.93px;font-size:10.3px;color:#e6e6e6;font-weight:normal;transform:scaleX(0.9483);transform-origin:0 0;">Translate</div>
<div class="r" style="left:161.5px;top:278.5px;width:165px;height:1px;background:#4a4a4a;"></div>
<div class="t" style="left:165.30px;top:288.03px;font-size:10.3px;color:#e6e6e6;font-weight:normal;transform:scaleX(0.9915);transform-origin:0 0;">Quick Analysis</div>
<div class="r" style="left:165.5px;top:296.3px;width:8px;height:0.9px;background:#bdbdbd;"></div>
<div class="t" style="left:165.30px;top:313.33px;font-size:10.3px;color:#e6e6e6;font-weight:normal;transform:scaleX(0.9381);transform-origin:0 0;">Filter</div>
<div class="r" style="left:178px;top:321.6px;width:5.5px;height:0.9px;background:#bdbdbd;"></div>
<div class="t" style="left:165.30px;top:339.33px;font-size:10.3px;color:#e6e6e6;font-weight:normal;">Sort</div>
<div class="r" style="left:171px;top:347.6px;width:6px;height:0.9px;background:#bdbdbd;"></div>
<svg class="s" style="left:313.5px;top:312px;" width="7" height="11" viewBox="0 0 7 11"><polyline points="1.2,1 5.3,5 1.2,9" fill="none" stroke="#e0e0e0" stroke-width="1.2"/></svg>
<svg class="s" style="left:313.5px;top:338px;" width="7" height="11" viewBox="0 0 7 11"><polyline points="1.2,1 5.3,5 1.2,9" fill="none" stroke="#e0e0e0" stroke-width="1.2"/></svg>
<div class="r" style="left:161.5px;top:357px;width:165px;height:1px;background:#4a4a4a;"></div>
<div class="t" style="left:165.30px;top:366.53px;font-size:10.3px;color:#e6e6e6;font-weight:normal;transform:scaleX(1.0070);transform-origin:0 0;">Get Data from Table/Range...</div>
<div class="r" style="left:165.5px;top:374.8px;width:8px;height:0.9px;background:#bdbdbd;"></div>
<div class="r" style="left:161.5px;top:385px;width:165px;height:1px;background:#4a4a4a;"></div>
<div class="t" style="left:165.30px;top:394.73px;font-size:10.3px;color:#e6e6e6;font-weight:normal;transform:scaleX(1.0259);transform-origin:0 0;">New Comment</div>
<div class="r" style="left:202.5px;top:403.0px;width:8px;height:0.9px;background:#bdbdbd;"></div>
<div class="t" style="left:165.30px;top:420.73px;font-size:10.3px;color:#e6e6e6;font-weight:normal;transform:scaleX(1.0180);transform-origin:0 0;">New Note</div>
<div class="r" style="left:165.5px;top:429.0px;width:8px;height:0.9px;background:#bdbdbd;"></div>
<div class="r" style="left:161.5px;top:438.5px;width:165px;height:1px;background:#4a4a4a;"></div>
<div class="t" style="left:165.30px;top:447.83px;font-size:10.3px;color:#e6e6e6;font-weight:normal;transform:scaleX(0.9761);transform-origin:0 0;">Format Cells...</div>
<div class="r" style="left:165.5px;top:456.1px;width:6px;height:0.9px;background:#bdbdbd;"></div>
<div class="r" style="left:133px;top:470px;width:193px;height:8.3px;overflow:hidden;">
<div class="t" style="left:32.80px;top:4.53px;font-size:10.3px;color:#e6e6e6;font-weight:normal;">Pick From Drop-down List...</div>
</div>
<div class="r" style="left:133px;top:478.3px;width:193px;height:1px;background:#555555;"></div>
<svg class="s" style="left:226.0px;top:486.4px;" width="8" height="5.2" viewBox="0 0 8 5.2"><polyline points="1,1 4.0,4.2 7,1" fill="none" stroke="#e0e0e0" stroke-width="1.2"/></svg>
<div class="r" style="left:145.5px;top:173.8px;width:69.5px;height:24.6px;background:transparent;border:2.8px solid #d42a35;box-sizing:border-box;"></div>
<svg class="s" style="left:144px;top:17px;" width="14" height="16" viewBox="0 0 14 16">
<path d="M4 1 L9.3 10.3 M10 1 L4.7 10.3" stroke="#d8d8d8" stroke-width="1.05"/>
<circle cx="4.6" cy="12" r="1.9" fill="none" stroke="#3d8bd0" stroke-width="1.2"/>
<circle cx="9.4" cy="12" r="1.9" fill="none" stroke="#3d8bd0" stroke-width="1.2"/>
</svg>
<svg class="s" style="left:142.5px;top:41.5px;" width="17" height="16" viewBox="0 0 17 16">
<path d="M6 3 V1 H1 V12 H5" fill="none" stroke="#cfcfcf" stroke-width="1.2"/>
<path d="M5 4 H11 L15 8 V15 H5 Z" fill="none" stroke="#cfcfcf" stroke-width="1.2"/>
<path d="M11 4 V8 H15" fill="none" stroke="#cfcfcf" stroke-width="1"/>
<line x1="7.5" y1="10.5" x2="12.5" y2="10.5" stroke="#cfcfcf" stroke-width="0.9"/>
<line x1="7.5" y1="12.5" x2="12.5" y2="12.5" stroke="#cfcfcf" stroke-width="0.9"/>
</svg>
<svg class="s" style="left:144px;top:66px;" width="16" height="17" viewBox="0 0 16 17">
<path d="M2 3.7 H4.3 M9.8 3.7 H12 V6.8" fill="none" stroke="#e8a845" stroke-width="1.5"/>
<path d="M2 3.2 V14.6 H7" fill="none" stroke="#e8a845" stroke-width="1.5"/>
<path d="M4.3 5 V3 Q4.3 2.4 5.2 2.4 H5.8 Q7 0.6 8.3 2.4 H8.9 Q9.8 2.4 9.8 3 V5 Z" fill="none" stroke="#c8c8c8" stroke-width="1"/>
<rect x="8" y="7.5" width="5.5" height="7.6" fill="none" stroke="#c8c8c8" stroke-width="1.1"/>
</svg>
<svg class="s" style="left:165px;top:91.5px;" width="21" height="22" viewBox="0 0 21 22">
<path d="M3.5 4.5 H6.5 M13 4.5 H16 V10" fill="none" stroke="#e8a845" stroke-width="1.8"/>
<path d="M2.5 4 V20.5 H10" fill="none" stroke="#e8a845" stroke-width="1.8"/>
<path d="M6.5 6 V3 Q6.5 2 7.5 2 H8.5 Q9.8 0.3 11 2 H12 Q13 2 13 3 V6 Z" fill="none" stroke="#cfcfcf" stroke-width="1"/>
<rect x="10.5" y="10" width="9" height="11" fill="none" stroke="#cfcfcf" stroke-width="1.2"/>
</svg>
<svg class="s" style="left:191px;top:91.5px;" width="21" height="22" viewBox="0 0 21 22">
<path d="M3.5 4.5 H6.5 M13 4.5 H16 V8" fill="none" stroke="#e8a845" stroke-width="1.8"/>
<path d="M2.5 4 V20.5 H6" fill="none" stroke="#e8a845" stroke-width="1.8"/>
<path d="M6.5 6 V3 Q6.5 2 7.5 2 H8.5 Q9.8 0.3 11 2 H12 Q13 2 13 3 V6 Z" fill="none" stroke="#cfcfcf" stroke-width="1"/>
<rect x="6.5" y="9" width="13" height="12" fill="none" stroke="#cfcfcf" stroke-width="1.2"/>
<rect x="8.5" y="11" width="9" height="8" fill="none" stroke="#cfcfcf" stroke-width="0.9"/>
<path d="M9 18 L12 14.5 L14 16.5 L15.5 15 L17 17 V18.5 H9Z" fill="#3b8fd9"/>
</svg>
<svg class="s" style="left:143px;top:149px;" width="17" height="18" viewBox="0 0 17 18">
<circle cx="9.8" cy="6.1" r="4.5" fill="none" stroke="#5d9fd6" stroke-width="1.3"/>
<line x1="6.6" y1="9.3" x2="1.6" y2="14.3" stroke="#5d9fd6" stroke-width="1.3"/>
<circle cx="9.8" cy="3.9" r="0.7" fill="#dcdcdc"/>
<rect x="9.25" y="5.2" width="1.1" height="3.2" fill="#dcdcdc"/>
</svg>
<svg class="s" style="left:142px;top:256px;" width="17" height="16" viewBox="0 0 17 16">
<text x="0.3" y="15" font-family="Liberation Sans" font-size="9.5" fill="#4a9fe0">a</text>
<path d="M1.5 1 V6 M1.5 3.5 L5 1 M1.5 3.5 L5 6" fill="none" stroke="#4a9fe0" stroke-width="1.2"/>
<path d="M9 2.5 H15 M12 1 V4 M10 8 Q9 5 12 4.5 Q15 5 14.5 7.5 Q13 8.5 11 7" fill="none" stroke="#5cc86e" stroke-width="1.1"/>
<path d="M15.5 9.5 L11 14 M15.5 14 H11.5 M15.5 14 V10.5" fill="none" stroke="#5cc86e" stroke-width="1.3"/>
</svg>
<svg class="s" style="left:142px;top:283px;" width="17" height="16" viewBox="0 0 17 16">
<rect x="2" y="4" width="14" height="11" fill="none" stroke="#cfcfcf" stroke-width="1.2"/>
<rect x="5" y="9" width="8" height="3.5" fill="none" stroke="#cfcfcf" stroke-width="1"/>
<path d="M5.5 0.5 L1.5 5 H4.5 L2.5 9 L7.5 4 H4.5 L6.5 0.5Z" fill="#e8c44a"/>
</svg>
<svg class="s" style="left:142px;top:362px;" width="16" height="16" viewBox="0 0 16 16">
<rect x="1.5" y="1.5" width="13.5" height="13.5" fill="none" stroke="#cfcfcf" stroke-width="1.2"/>
<rect x="2" y="2" width="12.5" height="3" fill="#4a9fe0" opacity="0.6"/>
<line x1="1.5" y1="5.5" x2="15" y2="5.5" stroke="#cfcfcf" stroke-width="1"/>
<line x1="1.5" y1="8.7" x2="15" y2="8.7" stroke="#cfcfcf" stroke-width="1"/>
<line x1="1.5" y1="11.9" x2="15" y2="11.9" stroke="#cfcfcf" stroke-width="1"/>
<line x1="6" y1="1.5" x2="6" y2="15" stroke="#cfcfcf" stroke-width="1"/><line x1="10.5" y1="1.5" x2="10.5" y2="5.5" stroke="#cfcfcf" stroke-width="1"/>
</svg>
<svg class="s" style="left:142px;top:390px;" width="17" height="16" viewBox="0 0 17 16">
<path d="M6 3 H15.5 V11 H6.5 L3.5 14.5 V11 H2.5 V7" fill="none" stroke="#cfcfcf" stroke-width="1.1" stroke-linejoin="round"/>
<path d="M3.5 0.5 V6 M0.8 3.3 H6.2" stroke="#5cc86e" stroke-width="1.2"/>
</svg>
<svg class="s" style="left:142px;top:416px;" width="17" height="16" viewBox="0 0 17 16">
<path d="M6 3 H15.5 V11 L11.5 15 H2.5 V7" fill="none" stroke="#cfcfcf" stroke-width="1.1"/>
<path d="M15.5 11 H11.5 V15" fill="none" stroke="#cfcfcf" stroke-width="1"/>
<path d="M3.5 0.5 V6 M0.8 3.3 H6.2" stroke="#5cc86e" stroke-width="1.2"/>
</svg>
<svg class="s" style="left:144px;top:443px;" width="13" height="17" viewBox="0 0 13 17">
<rect x="1.2" y="1.2" width="10.5" height="14.5" fill="none" stroke="#cfcfcf" stroke-width="1.1"/>
<line x1="3.5" y1="6" x2="5.5" y2="6" stroke="#cfcfcf"/><line x1="6.5" y1="6" x2="9" y2="6" stroke="#cfcfcf"/>
<line x1="3.5" y1="9" x2="5.5" y2="9" stroke="#cfcfcf"/><line x1="6.5" y1="9" x2="9" y2="9" stroke="#cfcfcf"/>
</svg>
<div class="r" style="left:133px;top:515px;width:228.5px;height:50px;background:#2b2b2b;border:1px solid #666;border-radius:4px;box-sizing:border-box;"></div>
<div class="r" style="left:136.2px;top:517.3px;width:48.6px;height:21.1px;background:#2b2b2b;border:1px solid #4e4e4e;border-radius:3px;box-sizing:border-box;"></div>
<div class="r" style="left:136px;top:517px;width:38px;height:20px;overflow:hidden;">
<div class="t" style="left:2.30px;top:7.33px;font-size:9px;color:#e6e6e6;font-weight:normal;">Aptos Narrow</div>
</div>
<svg class="s" style="left:175.95000000000002px;top:525.7px;" width="6.7" height="5" viewBox="0 0 6.7 5"><polyline points="1,1 3.35,4 5.7,1" fill="none" stroke="#e0e0e0" stroke-width="1.2"/></svg>
<div class="r" style="left:187.3px;top:517.3px;width:36.4px;height:21.1px;background:#2b2b2b;border:1px solid #4e4e4e;border-radius:3px;box-sizing:border-box;"></div>
<div class="t" style="left:190.00px;top:523.91px;font-size:9.5px;color:#e6e6e6;font-weight:normal;transform:scaleX(0.9141);transform-origin:0 0;">12</div>
<svg class="s" style="left:214.95000000000002px;top:525.7px;" width="6.9" height="5" viewBox="0 0 6.9 5"><polyline points="1,1 3.45,4 5.9,1" fill="none" stroke="#e0e0e0" stroke-width="1.2"/></svg>
<svg class="s" style="left:228.3px;top:520.5px;" width="11" height="12" viewBox="0 0 11 12"><path d="M0.8 11.5 L5.2 0.7 L9.6 11.5 M2.5 7.6 H7.9" fill="none" stroke="#e4e4e4" stroke-width="1.25"/></svg>
<svg class="s" style="left:237px;top:520px;" width="6" height="5" viewBox="0 0 6 5"><polyline points="1,3.5 3,1.3 5,3.5" fill="none" stroke="#4a9fe0" stroke-width="1"/></svg>
<svg class="s" style="left:250.4px;top:522.5px;" width="9" height="10" viewBox="0 0 9 10"><path d="M0.8 9.5 L4.25 0.7 L7.7 9.5 M2.1 6.3 H6.4" fill="none" stroke="#e4e4e4" stroke-width="1.2"/></svg>
<svg class="s" style="left:257.5px;top:520.5px;" width="6" height="5" viewBox="0 0 6 5"><polyline points="1,1.3 3,3.5 5,1.3" fill="none" stroke="#4a9fe0" stroke-width="1"/></svg>
<svg class="s" style="left:268px;top:522px;" width="17" height="14" viewBox="0 0 17 14"><rect x="1" y="1" width="13" height="8" fill="none" stroke="#cfcfcf" stroke-width="1"/><text x="2" y="7.5" font-size="6" font-family="Liberation Sans" fill="#cfcfcf">CC</text><rect x="9" y="6" width="6" height="7" rx="1.5" fill="#e8c44a"/><line x1="9.5" y1="9.3" x2="14.5" y2="9.3" stroke="#2b2b2b" stroke-width="0.8"/></svg>
<svg class="s" style="left:288.0px;top:525.8000000000001px;" width="7.2" height="4.6" viewBox="0 0 7.2 4.6"><polyline points="1,1 3.6,3.6 6.2,1" fill="none" stroke="#e0e0e0" stroke-width="1.2"/></svg>
<svg class="s" style="left:302.3px;top:520.7px;" width="14.5" height="14" viewBox="0 0 14.5 14"><circle cx="3.6" cy="3.6" r="2.6" fill="none" stroke="#e4e4e4" stroke-width="1.2"/><circle cx="10.9" cy="10.3" r="2.6" fill="none" stroke="#e4e4e4" stroke-width="1.2"/><line x1="12" y1="0.8" x2="2.5" y2="13.2" stroke="#e4e4e4" stroke-width="1.2"/></svg>
<svg class="s" style="left:326px;top:522px;" width="9" height="12" viewBox="0 0 9 12"><path d="M4.5 0.5 Q8.5 0.5 8.5 4.5 Q8.5 9.5 2 11.5 L1.7 10.5 Q5 9 5.3 7.3 Q1.3 7.5 1.3 4 Q1.3 0.5 4.5 0.5Z" fill="#e8e8e8"/></svg>
<svg class="s" style="left:342.5px;top:520px;" width="15" height="14.5" viewBox="0 0 15 14.5"><rect x="1" y="1" width="13" height="12.5" fill="#1d4a75" stroke="#9ec0de" stroke-width="1.1"/><line x1="1" y1="3.8" x2="14" y2="3.8" stroke="#9ec0de" stroke-width="0.9"/><line x1="1" y1="10.7" x2="14" y2="10.7" stroke="#9ec0de" stroke-width="0.9"/><path d="M3.5 7.3 H11.5 M5.3 5.5 L3.5 7.3 L5.3 9.1 M9.7 5.5 L11.5 7.3 L9.7 9.1" fill="none" stroke="#6aaee8" stroke-width="1.1"/></svg>
<div class="t" style="left:142.80px;top:543.04px;font-size:11px;color:#e8e8e8;font-weight:bold;transform:scaleX(0.8250);transform-origin:0 0;">B</div>
<svg class="s" style="left:163.5px;top:543px;" width="7" height="9" viewBox="0 0 7 9"><path d="M3 0.6 H6.6 M0.4 8.4 H4 M4.8 0.6 L2.2 8.4" fill="none" stroke="#e4e4e4" stroke-width="1.1"/></svg>
<svg class="s" style="left:180px;top:541.5px;" width="14" height="13" viewBox="0 0 14 13"><path d="M1 1 H13 M1 4.5 H13 M1 8 H13 M1 11.5 H13" stroke="#e0e0e0" stroke-width="1.2"/></svg>
<svg class="s" style="left:201.5px;top:541.5px;" width="15" height="15" viewBox="0 0 15 15"><path d="M2 7.5 L7 2.5 L11.5 7 L7 11.5 Z" fill="none" stroke="#d8d8d8" stroke-width="1.1"/><path d="M8.5 2 Q12 0.5 13 5" fill="none" stroke="#4a9fe0" stroke-width="1.1"/><rect x="1" y="12" width="13" height="2.5" fill="#555" stroke="#9a9a9a" stroke-width="0.8"/></svg>
<svg class="s" style="left:219.8px;top:545.95px;" width="6" height="4.5" viewBox="0 0 6 4.5"><polyline points="1,1 3.0,3.5 5,1" fill="none" stroke="#e0e0e0" stroke-width="1.2"/></svg>
<svg class="s" style="left:236.7px;top:541.5px;" width="9" height="10" viewBox="0 0 9 10"><path d="M0.8 9.5 L4.45 0.6 L8.1 9.5 M2.1 6.4 H6.8" fill="none" stroke="#e4e4e4" stroke-width="1.2"/></svg>
<div class="r" style="left:233.5px;top:552.3px;width:14.8px;height:3.5px;background:#e01a1a;"></div>
<svg class="s" style="left:252.6px;top:546.9000000000001px;" width="7.2" height="4.6" viewBox="0 0 7.2 4.6"><polyline points="1,1 3.6,3.6 6.2,1" fill="none" stroke="#e0e0e0" stroke-width="1.2"/></svg>
<svg class="s" style="left:267px;top:541.5px;" width="14.5" height="14" viewBox="0 0 14.5 14"><rect x="0.8" y="0.8" width="12.8" height="12.4" fill="none" stroke="#cfcfcf" stroke-width="1"/><path d="M7.2 0.8 V13.2 M0.8 7 H13.6" stroke="#cfcfcf" stroke-width="1"/></svg>
<svg class="s" style="left:285.79999999999995px;top:546.9000000000001px;" width="7.2" height="4.6" viewBox="0 0 7.2 4.6"><polyline points="1,1 3.6,3.6 6.2,1" fill="none" stroke="#e0e0e0" stroke-width="1.2"/></svg>
<svg class="s" style="left:300px;top:541px;" width="15" height="15" viewBox="0 0 15 15"><path d="M6.5 4.5 H1 M3.3 2.2 L1 4.5 L3.3 6.8" fill="none" stroke="#4a9fe0" stroke-width="1.2"/><text x="7.5" y="8" font-size="8" font-family="Liberation Sans" fill="#e0e0e0">0</text><text x="1" y="14" font-size="8" font-family="Liberation Sans" fill="#e0e0e0">.00</text></svg>
<svg class="s" style="left:321px;top:541px;" width="15" height="15" viewBox="0 0 15 15"><text x="2" y="7.5" font-size="8" font-family="Liberation Sans" fill="#e0e0e0">.00</text><path d="M0.5 11 H6.5 M4.2 8.7 L6.5 11 L4.2 13.3" fill="none" stroke="#4a9fe0" stroke-width="1.2"/><text x="6.5" y="14" font-size="8" font-family="Liberation Sans" fill="#e0e0e0">.0</text></svg>
<svg class="s" style="left:341px;top:541px;" width="15" height="15" viewBox="0 0 15 15"><path d="M1.2 8 L7.3 13.8 L10.2 8.8 L6.3 5 Z" fill="none" stroke="#e8a845" stroke-width="1.2" stroke-linejoin="round"/><path d="M4.3 11 L7.3 13.8 L8.7 11.4 L6 9 Z" fill="#e8a845"/><path d="M6.3 5 L8.3 3.2 L11.8 6.7 L10.2 8.8" fill="none" stroke="#d0d0d0" stroke-width="1.1"/><path d="M9.5 4.5 L12.9 1.2 Q14.2 1 14 2.5 L10.8 5.9" fill="none" stroke="#d0d0d0" stroke-width="1.1"/></svg>
</body></html>
